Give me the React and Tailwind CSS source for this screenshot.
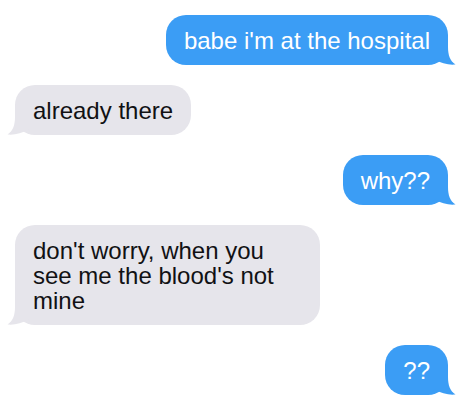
import React from 'react'

const messages = [
  { from: 'me', text: "babe i'm at the hospital" },
  { from: 'them', text: 'already there' },
  { from: 'me', text: 'why??' },
  { from: 'them', text: "don't worry, when you see me the blood's not mine" },
  { from: 'me', text: '??' },
]

const Tail = ({ mine }) => (
  <svg
    width="28"
    height="22"
    viewBox="0 0 28 22"
    className={
      mine
        ? 'absolute bottom-0 right-[-8px] overflow-visible'
        : 'absolute bottom-0 left-[-8px] overflow-visible -scale-x-100'
    }
  >
    <path
      d="M20 0 L20 4 C20 12 22 18 27.5 21.5 C21 22.2 13 20.5 7 16.8 C4.5 19 2 21 0 22 L0 0 Z"
      fill={mine ? '#3b9df5' : '#e6e5eb'}
    />
  </svg>
)

const Bubble = ({ from, text }) => {
  const mine = from === 'me'
  return (
    <div className={mine ? 'flex justify-end' : 'flex justify-start'}>
      <div
        className={
          'relative max-w-[305px] rounded-[20px] px-[18px] py-[12.5px] text-[24px] leading-[25px] ' +
          (mine ? 'bg-[#3b9df5] text-white' : 'bg-[#e6e5eb] text-[#111114]')
        }
      >
        <Tail mine={mine} />
        <span className="relative">{text}</span>
      </div>
    </div>
  )
}

export default function App() {
  return (
    <div
      className="min-h-screen bg-white pt-[15px] pl-[15px] pr-[20px] flex flex-col gap-[20px]"
      style={{ fontFamily: '"Liberation Sans", Arial, sans-serif' }}
    >
      {messages.map((m, i) => (
        <Bubble key={i} {...m} />
      ))}
    </div>
  )
}
